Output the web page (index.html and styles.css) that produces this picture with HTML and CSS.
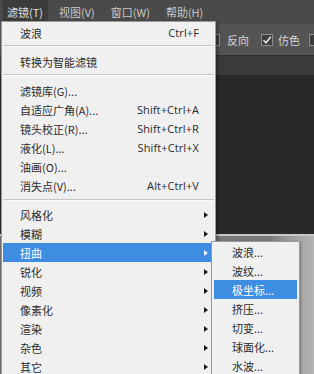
FILE: index.html
```html
<!DOCTYPE html>
<html lang="zh-CN">

<head>
    <meta charset="UTF-8">
    <meta name="viewport" content="width=device-width, initial-scale=1.0">
    <title>滤镜菜单</title>
    <link rel="stylesheet" href="styles.css">
</head>

<body>
    <div class="app">
        <!-- top menu bar -->
        <nav class="menubar">
            <span class="menubar-item active">滤镜(T)</span>
            <span class="menubar-item">视图(V)</span>
            <span class="menubar-item">窗口(W)</span>
            <span class="menubar-item">帮助(H)</span>
        </nav>

        <!-- options bar -->
        <div class="options">
            <span class="check"></span>
            <span class="option-label">反向</span>
            <span class="check checked">
                <svg width="10" height="10" viewBox="0 0 10 10">
                    <path d="M1.5 5.2 L4 7.8 L8.8 1.8" fill="none" stroke="#e6e6e6" stroke-width="1.6" />
                </svg>
            </span>
            <span class="option-label">仿色</span>
            <span class="check"></span>
        </div>

        <div class="tabbar"></div>

        <div class="workspace">
            <div class="canvas"></div>
            <div class="panel"></div>
        </div>

        <!-- filter dropdown -->
        <ul class="menu">
            <li class="menu-item"><span class="label">波浪</span><span class="shortcut">Ctrl+F</span><span class="arrow-cell"></span></li>
            <li class="menu-sep"></li>
            <li class="menu-item"><span class="label">转换为智能滤镜</span><span class="arrow-cell"></span></li>
            <li class="menu-sep"></li>
            <li class="menu-item"><span class="label">滤镜库(G)...</span><span class="arrow-cell"></span></li>
            <li class="menu-item"><span class="label">自适应广角(A)...</span><span class="shortcut">Shift+Ctrl+A</span><span class="arrow-cell"></span></li>
            <li class="menu-item"><span class="label">镜头校正(R)...</span><span class="shortcut">Shift+Ctrl+R</span><span class="arrow-cell"></span></li>
            <li class="menu-item"><span class="label">液化(L)...</span><span class="shortcut">Shift+Ctrl+X</span><span class="arrow-cell"></span></li>
            <li class="menu-item"><span class="label">油画(O)...</span><span class="arrow-cell"></span></li>
            <li class="menu-item"><span class="label">消失点(V)...</span><span class="shortcut">Alt+Ctrl+V</span><span class="arrow-cell"></span></li>
            <li class="menu-sep sep-wide"></li>
            <li class="menu-item"><span class="label">风格化</span><span class="arrow-cell"><i class="arrow"></i></span></li>
            <li class="menu-item"><span class="label">模糊</span><span class="arrow-cell"><i class="arrow"></i></span></li>
            <li class="menu-item selected"><span class="label">扭曲</span><span class="arrow-cell"><i class="arrow"></i></span></li>
            <li class="menu-item"><span class="label">锐化</span><span class="arrow-cell"><i class="arrow"></i></span></li>
            <li class="menu-item"><span class="label">视频</span><span class="arrow-cell"><i class="arrow"></i></span></li>
            <li class="menu-item"><span class="label">像素化</span><span class="arrow-cell"><i class="arrow"></i></span></li>
            <li class="menu-item"><span class="label">渲染</span><span class="arrow-cell"><i class="arrow"></i></span></li>
            <li class="menu-item"><span class="label">杂色</span><span class="arrow-cell"><i class="arrow"></i></span></li>
            <li class="menu-item"><span class="label">其它</span><span class="arrow-cell"><i class="arrow"></i></span></li>
        </ul>

        <!-- distort submenu -->
        <ul class="menu submenu">
            <li class="menu-item"><span class="label">波浪...</span></li>
            <li class="menu-item"><span class="label">波纹...</span></li>
            <li class="menu-item selected"><span class="label">极坐标...</span></li>
            <li class="menu-item"><span class="label">挤压...</span></li>
            <li class="menu-item"><span class="label">切变...</span></li>
            <li class="menu-item"><span class="label">球面化...</span></li>
            <li class="menu-item"><span class="label">水波...</span></li>
        </ul>
    </div>
</body>

</html>
```

FILE: styles.css
```css
/* General styles */
* {
    box-sizing: border-box;
}

body {
    margin: 0;
    padding: 0;
    background-color: #282828;
    font-family: "Noto Sans CJK SC", "Noto Sans", sans-serif;
    font-size: 11px;
    overflow: hidden;
}

.app {
    position: relative;
    width: 314px;
    height: 374px;
    display: flex;
    flex-direction: column;
    overflow: hidden;
}

/* Menu bar */
.menubar {
    height: 24px;
    flex: none;
    background-color: #4a4a4a;
    display: flex;
    align-items: flex-start;
    padding-left: 3px;
    gap: 7px;
    color: #c9c9c9;
}

.menubar-item {
    height: 22px;
    line-height: 20px;
    padding: 2px 5px 0 4px;
    white-space: nowrap;
}

.menubar-item.active {
    background-color: #3c3c3c;
    color: #e2e2e2;
}

/* Options bar */
.options {
    height: 32px;
    flex: none;
    background-color: #545454;
    border-bottom: 1px solid #303030;
    display: flex;
    align-items: center;
    padding-left: 208px;
    color: #d6d6d6;
    overflow: hidden;
}

.check {
    width: 12px;
    height: 12px;
    flex: none;
    border: 1px solid #8c8c8c;
    background-color: #3e3e3e;
    display: flex;
    align-items: center;
    justify-content: center;
}

.option-label {
    flex: none;
    white-space: nowrap;
    margin: 0 12px 0 7px;
}

.check.checked + .option-label {
    margin: 0 9px 0 5px;
}

.tabbar {
    height: 19px;
    flex: none;
    background-color: #3b3b3b;
}

.workspace {
    flex: 1;
    display: flex;
    flex-direction: column;
}

.canvas {
    height: 159px;
    flex: none;
    background-color: #292929;
}

.panel {
    flex: 1;
    border-top: 2px solid #c9c9c9;
    background: linear-gradient(to right, #6f6f6f 0, #7a7a7a 86%, #9c9c9c 92%, #b4b4b4 100%);
}

/* Dropdown menus */
.menu {
    position: absolute;
    top: 21px;
    left: 1px;
    width: 215px;
    margin: 0;
    padding: 1px;
    list-style: none;
    background-color: #f0f0f0;
    border: 1px solid #9a9a9a;
    color: #2b2b2b;
    box-shadow: 2px 2px 3px rgba(0, 0, 0, 0.35);
}

.menu-item {
    height: 19px;
    display: flex;
    align-items: center;
    padding-left: 17px;
    white-space: nowrap;
}

.menu-item .label {
    flex: 1;
}

.menu-item .shortcut {
    font-family: "Open Sans", "Noto Sans", sans-serif;
    font-size: 11px;
    letter-spacing: 0.1px;
}

.arrow-cell {
    width: 15px;
    height: 19px;
    display: flex;
    align-items: center;
    padding-left: 5px;
}

.arrow {
    width: 0;
    height: 0;
    border-left: 4px solid #1a1a1a;
    border-top: 3.5px solid transparent;
    border-bottom: 3.5px solid transparent;
}

.menu-item.selected {
    background-color: #3d8de3;
    color: #ffffff;
}

.menu-item.selected .arrow {
    border-left-color: #e8f1fb;
}

.menu-sep {
    height: 10px;
    padding-top: 3px;
}

.menu-sep::before {
    content: "";
    display: block;
    height: 1px;
    background-color: #c6c6c6;
    border-bottom: 1px solid #fafafa;
}

.sep-wide {
    padding-top: 4px;
}

.submenu {
    top: 241px;
    left: 211px;
    width: 89px;
    padding: 0 2px;
    box-shadow: 1px 1px 2px rgba(0, 0, 0, 0.3);
}

.submenu .menu-item {
    padding-left: 18px;
}
```
